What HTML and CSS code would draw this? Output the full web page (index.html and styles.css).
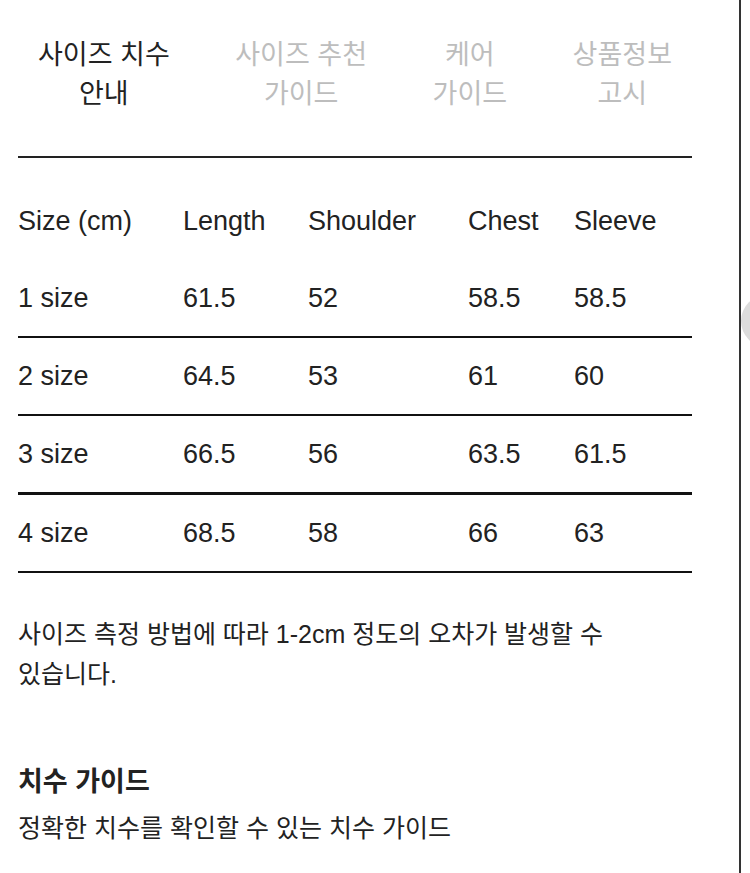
FILE: index.html
```html
<!DOCTYPE html>
<html lang="ko">
<head>
<meta charset="utf-8">
<link rel="stylesheet" href="styles.css">
</head>
<body>
<div class="frame">
  <main class="panel">
    <nav class="tabs">
      <div class="tab active">사이즈 치수<br>안내</div>
      <div class="tab">사이즈 추천<br>가이드</div>
      <div class="tab">케어<br>가이드</div>
      <div class="tab">상품정보<br>고시</div>
    </nav>
    <table class="size-table">
      <thead>
        <tr><th>Size (cm)</th><th>Length</th><th>Shoulder</th><th>Chest</th><th>Sleeve</th></tr>
      </thead>
      <tbody>
        <tr><td>1 size</td><td>61.5</td><td>52</td><td>58.5</td><td>58.5</td></tr>
        <tr><td>2 size</td><td>64.5</td><td>53</td><td>61</td><td>60</td></tr>
        <tr><td>3 size</td><td>66.5</td><td>56</td><td>63.5</td><td>61.5</td></tr>
        <tr><td>4 size</td><td>68.5</td><td>58</td><td>66</td><td>63</td></tr>
      </tbody>
    </table>
    <p class="note">사이즈 측정 방법에 따라 1-2cm 정도의 오차가 발생할 수 있습니다.</p>
    <h2 class="guide-title">치수 가이드</h2>
    <p class="guide-desc">정확한 치수를 확인할 수 있는 치수 가이드</p>
  </main>
  <aside class="side">
    <div class="side-knob"></div>
  </aside>
</div>
</body>
</html>
```
FILE: styles.css
```css
html, body {
  margin: 0;
  padding: 0;
  background: #fff;
}
body {
  width: 750px;
  height: 873px;
  overflow: hidden;
  font-family: "Noto Sans CJK KR", "Liberation Sans", sans-serif;
  color: #222;
  word-break: keep-all;
}
.frame {
  display: flex;
  height: 873px;
}
.panel {
  width: 741px;
  flex: none;
  box-sizing: border-box;
  padding: 0 47px 0 18px;
  border-right: 2px solid #333;
}
.tabs {
  display: flex;
  justify-content: space-between;
  padding: 33px 20px 0 20px;
  height: 123px;
  border-bottom: 2px solid #222;
}
.tab {
  font-size: 27px;
  line-height: 39px;
  text-align: center;
  color: #bdbdbd;
}
.tab.active {
  color: #222;
}
.size-table {
  width: 100%;
  border-collapse: collapse;
  margin-top: 24px;
  font-family: "Liberation Sans", Arial, sans-serif;
  font-size: 27px;
  color: #222;
}
.size-table th,
.size-table td {
  padding: 0;
  text-align: left;
  font-weight: normal;
  vertical-align: middle;
}
.size-table th {
  height: 78px;
}
.size-table td {
  height: 76px;
}
.size-table th:nth-child(1) { width: 165px; }
.size-table th:nth-child(2) { width: 125px; }
.size-table th:nth-child(3) { width: 160px; }
.size-table th:nth-child(4) { width: 106px; }
.size-table tbody tr {
  border-bottom: 2px solid #111;
}
.size-table tbody tr:nth-child(3) {
  border-bottom-width: 3px;
}
.note {
  margin: 41px 0 0 0;
  font-family: "Liberation Sans", "Noto Sans CJK KR", sans-serif;
  font-size: 25px;
  line-height: 40px;
  color: #222;
}
.guide-title {
  margin: 69px 0 0 0;
  font-size: 27px;
  line-height: 34px;
  font-weight: bold;
  color: #222;
}
.guide-desc {
  margin: 12px 0 0 0;
  font-size: 25px;
  line-height: 34px;
  color: #222;
}
.side {
  position: relative;
  flex: 1;
  overflow: hidden;
}
.side-knob {
  position: absolute;
  left: 0;
  top: 295px;
  width: 52px;
  height: 52px;
  border-radius: 50%;
  background: #dcdcdc;
}
```
